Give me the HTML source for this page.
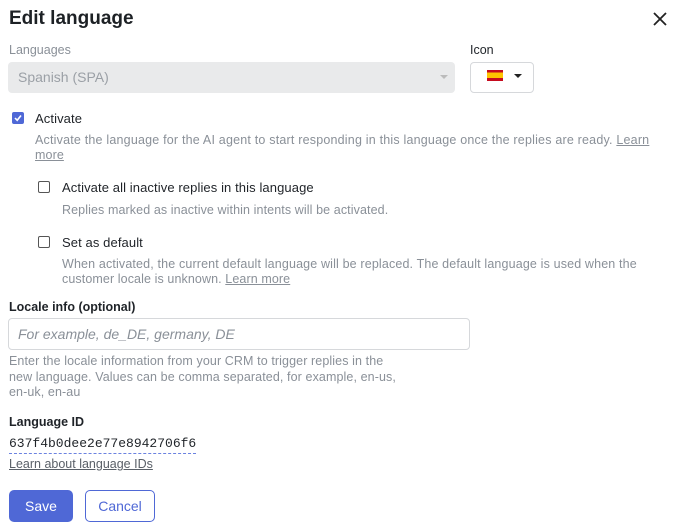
<!DOCTYPE html>
<html><head><style>
*{box-sizing:border-box;margin:0;padding:0}
body{width:680px;height:532px;background:#fff;font-family:"Liberation Sans",sans-serif;color:#1f2328;position:relative;overflow:hidden}
.a{position:absolute;white-space:nowrap}
.g{color:#8a9098;font-size:12.5px;letter-spacing:0.1px}
.l{font-size:13px;color:#1f2328;letter-spacing:0.1px}
.cb{position:absolute;width:12px;height:12px;border:1.5px solid #555;border-radius:2px;background:#fff}
u{text-decoration:underline}
</style></head><body>
<div class="a" style="left:9px;top:8px;font-size:19px;font-weight:bold;color:#1d2125">Edit language</div>
<svg class="a" style="left:653px;top:12px" width="14" height="14" viewBox="0 0 14 14"><path d="M1 1L13 13M13 1L1 13" stroke="#222" stroke-width="1.8"/></svg>
<div class="a" style="left:9px;top:43px;font-size:12.5px;color:#8a9098">Languages</div>
<div class="a" style="left:470px;top:43px;font-size:12.5px;color:#1f2328">Icon</div>
<div class="a" style="left:8px;top:62px;width:447px;height:31px;background:#e9eaeb;border-radius:4px"></div>
<div class="a" style="left:18px;top:69px;font-size:14px;color:#9ba0a6">Spanish (SPA)</div>
<div class="a" style="left:440px;top:75px;width:0;height:0;border-left:4px solid transparent;border-right:4px solid transparent;border-top:4px solid #bbb"></div>
<div class="a" style="left:470px;top:62px;width:64px;height:31px;border:1px solid #d6d8db;border-radius:4px"></div>
<div class="a" style="left:487px;top:70px;width:16px;height:11px;background:linear-gradient(#c60b1e 0 25%,#ffc400 25% 75%,#c60b1e 75%)"></div>
<div class="a" style="left:514px;top:74px;width:0;height:0;border-left:4px solid transparent;border-right:4px solid transparent;border-top:4px solid #222"></div>
<div class="cb" style="left:12px;top:112px;background:#4f68d6;border-color:#4f68d6"></div>
<svg class="a" style="left:13px;top:113px" width="10" height="10" viewBox="0 0 10 10"><path d="M2 5L4.2 7.3L8 2.5" stroke="#fff" stroke-width="1.6" fill="none"/></svg>
<div class="a l" style="left:35px;top:111px">Activate</div>
<div class="a g" style="left:35px;top:133px;letter-spacing:0.2px">Activate the language for the AI agent to start responding in this language once the replies are ready. <u>Learn</u></div>
<div class="a g" style="left:35px;top:148px"><u>more</u></div>
<div class="cb" style="left:38px;top:181px"></div>
<div class="a l" style="left:62px;top:180px">Activate all inactive replies in this language</div>
<div class="a g" style="left:62px;top:203px">Replies marked as inactive within intents will be activated.</div>
<div class="cb" style="left:38px;top:236px"></div>
<div class="a l" style="left:62px;top:235px">Set as default</div>
<div class="a g" style="left:62px;top:257px;letter-spacing:0.15px">When activated, the current default language will be replaced. The default language is used when the</div>
<div class="a g" style="left:62px;top:272px">customer locale is unknown. <u>Learn more</u></div>
<div class="a" style="left:9px;top:300px;font-size:12.5px;font-weight:bold">Locale info (optional)</div>
<div class="a" style="left:8px;top:318px;width:462px;height:32px;border:1px solid #d6d8db;border-radius:4px"></div>
<div class="a" style="left:18px;top:326px;font-size:14px;font-style:italic;color:#8a9098">For example, de_DE, germany, DE</div>
<div class="a g" style="left:9px;top:354px;line-height:15.5px">Enter the locale information from your CRM to trigger replies in the<br>new language. Values can be comma separated, for example, en-us,<br>en-uk, en-au</div>
<div class="a" style="left:9px;top:415px;font-size:12.5px;font-weight:bold">Language ID</div>
<div class="a" style="left:9px;top:436px;font-family:'Liberation Mono',monospace;font-size:13px;border-bottom:1px dashed #6b82e0;padding-bottom:2px">637f4b0dee2e77e8942706f6</div>
<div class="a" style="left:9px;top:457px;font-size:12.5px;color:#5a6068"><u>Learn about language IDs</u></div>
<div class="a" style="left:9px;top:490px;width:64px;height:32px;background:#4f68d6;border-radius:5px;color:#fff;font-size:14px;text-align:center;line-height:32px">Save</div>
<div class="a" style="left:85px;top:490px;width:70px;height:32px;border:1px solid #4f68d6;border-radius:5px;color:#4f68d6;font-size:14px;text-align:center;line-height:30px">Cancel</div>
</body></html>
